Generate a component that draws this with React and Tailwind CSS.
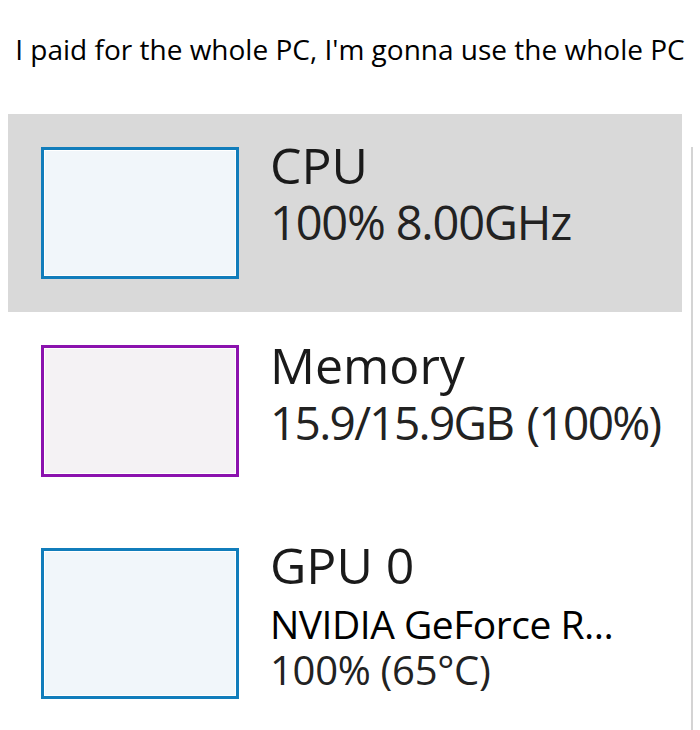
export default function App() {
  return (
    <div className="w-[700px] h-[730px] bg-white flex flex-col overflow-hidden font-['Open_Sans',_'Noto_Sans',_sans-serif]">
      <div className="h-[114px] pt-[35px] text-center text-[28px] leading-[28px] text-black whitespace-nowrap">
        I paid for the whole PC, I'm gonna use the whole PC
      </div>
      <div className="flex flex-1">
        <div className="ml-[8px] w-[674px] flex flex-col">
          {/* CPU */}
          <div className="h-[198px] bg-[#d9d9d9] flex items-start pl-[33px]">
            <div className="mt-[33px] w-[198px] h-[132px] border-[3px] border-[#117dbb] bg-white p-px shrink-0">
              <div className="w-full h-full bg-[#f1f6fa]" />
            </div>
            <div className="ml-[31px] mt-[23px] flex flex-col whitespace-nowrap">
              <div className="text-[50px] leading-[57px] text-[#1a1a1a]">CPU</div>
              <div className="text-[47px] leading-[57px] tracking-[-1.2px] text-[#222]">100% 8.00GHz</div>
            </div>
          </div>
          {/* Memory */}
          <div className="h-[198px] flex items-start pl-[33px]">
            <div className="mt-[33px] w-[198px] h-[132px] border-[3px] border-[#8b12ae] bg-white p-px shrink-0">
              <div className="w-full h-full bg-[#f4f2f4]" />
            </div>
            <div className="ml-[31px] mt-[25px] flex flex-col whitespace-nowrap">
              <div className="text-[50px] leading-[57px] text-[#1a1a1a]">Memory</div>
              <div className="text-[46px] leading-[57px] tracking-[-1.7px] [word-spacing:3px] text-[#222]">15.9/15.9GB (100%)</div>
            </div>
          </div>
          {/* GPU */}
          <div className="flex items-start pl-[33px]">
            <div className="mt-[38px] w-[198px] h-[151px] border-[3px] border-[#117dbb] bg-white p-px shrink-0">
              <div className="w-full h-full bg-[#f1f6fa]" />
            </div>
            <div className="ml-[31px] mt-[27px] flex flex-col whitespace-nowrap">
              <div className="text-[50px] leading-[57px] text-[#1a1a1a]">GPU 0</div>
              <div className="mt-[7px] text-[39px] leading-[46px] tracking-[-0.5px] text-black">NVIDIA GeForce R...</div>
              <div className="text-[40px] leading-[46px] tracking-[-0.3px] text-[#222]">100% (65°C)</div>
            </div>
          </div>
        </div>
        <div className="ml-[9px] mt-[33px] w-[2px] bg-[#d4d4d4]" />
      </div>
    </div>
  );
}
